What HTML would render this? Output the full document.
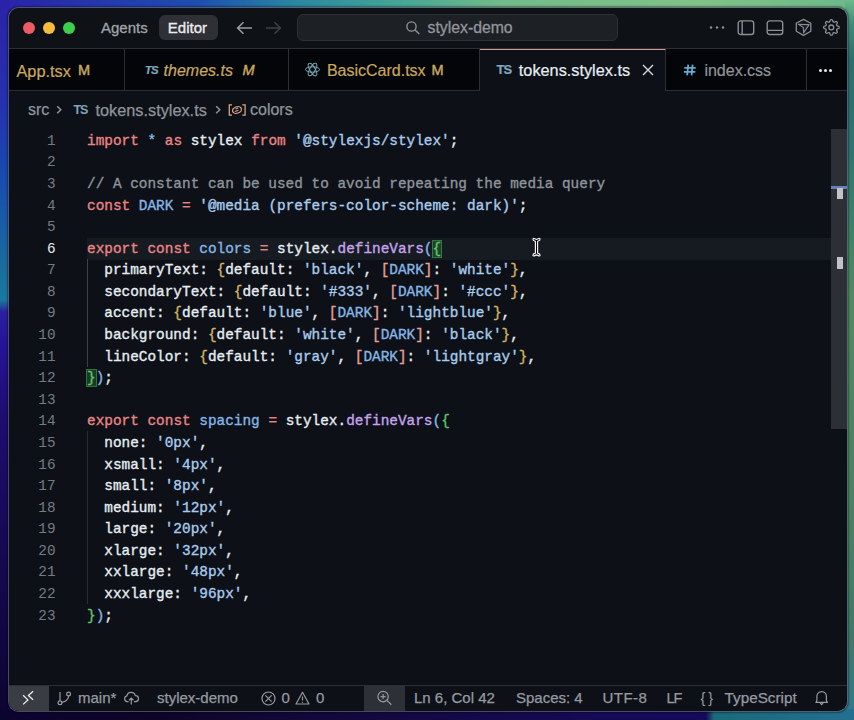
<!DOCTYPE html>
<html><head><meta charset="utf-8">
<style>
*{box-sizing:border-box;margin:0;padding:0}
html,body{width:854px;height:720px;overflow:hidden}
body{position:relative;font-family:"Liberation Sans",sans-serif;background:#1e1a70}
.bg{position:absolute;left:0;top:0;width:854px;height:720px}
#win{position:absolute;left:8px;top:7px;width:840px;height:705px;border-radius:11px;
 border:1px solid rgba(115,112,140,0.62);background:#0d1117;background-clip:padding-box;overflow:hidden;box-shadow:0 0 1.5px 0.5px rgba(0,0,0,0.35)}
.abs{position:absolute}
svg{position:absolute;overflow:visible}
#title{position:absolute;left:0;top:0;width:838px;height:41px;background:#0e1116;border-bottom:1px solid #2c3036}
#tabs{position:absolute;left:0;top:41px;width:838px;height:42px;background:#030509;border-bottom:1px solid #2c3036}
.tab{position:absolute;top:0;height:41px;border-right:1px solid #2c3036}
.lbl{position:absolute;font-size:16px;white-space:pre;line-height:20px;top:11.6px;-webkit-text-stroke:0.2px currentColor}
#editor{position:absolute;left:0;top:83px;width:838px;height:594px;background:#0d1117}
.code{position:absolute;left:78px;font-family:"Liberation Mono",monospace;font-size:14.4px;white-space:pre;line-height:21.58px;color:#e6edf3;-webkit-text-stroke:0.35px currentColor}
.ln{position:absolute;left:0;width:46.5px;text-align:right;font-family:"Liberation Mono",monospace;font-size:14.375px;line-height:21.58px;color:#737b85}
#status{position:absolute;left:0;top:677px;width:838px;height:26px;background:#0d1117;border-top:1px solid #2c3036}
.st{position:absolute;font-size:15px;color:#969aa1;white-space:pre;top:3px;line-height:18px;-webkit-text-stroke:0.25px currentColor}
.k{color:#e98486}.s{color:#a9cbee}.c{color:#86b6e6}.f{color:#c7a3ec}.cm{color:#8d949c}
.b1{color:#86b6e6}.b2{color:#62c46c}.b3{color:#d6b460}.b4{color:#e89e96}
.bm{outline:1px solid rgba(63,185,80,0.6);background:rgba(63,185,80,0.25)}
.gold{color:#c9a85e}.mm{font-weight:normal;font-size:14.5px!important;top:11.2px;-webkit-text-stroke:0.45px currentColor}
</style></head><body>
<div class="abs" style="left:0;top:0;width:854px;height:10px;background:linear-gradient(90deg,#2a22a8 0px,#1d4fb0 200px,#2a8aa0 300px,#45a595 400px,#72bb8a 500px,#80c288 700px,#6cb98a 854px)"></div>
<div class="abs" style="left:0;top:0;width:10px;height:720px;background:linear-gradient(180deg,#2a22a8 0px,#2530b0 100px,#1a45b0 160px,#1a5aa8 220px,#1a6e9c 270px,#1a78a0 300px,#2a20a0 312px,#26149a 340px,#1e0c70 420px,#160850 560px,#0c0430 720px)"></div>
<div class="abs" style="left:845px;top:0;width:9px;height:720px;background:linear-gradient(180deg,#6cb98a 0px,#3f8a78 25px,#2c6e6c 60px,#2f7570 150px,#3f8568 240px,#508a62 300px,#4a8264 500px,#3f7a6a 640px,#2f7890 720px)"></div>
<div class="abs" style="left:0;top:709px;width:854px;height:11px;background:linear-gradient(90deg,#0c0430 0px,#0e0428 150px,#120838 300px,#150a55 600px,#150a5a 706px,#1a6a7a 714px,#246f90 854px)"></div>
<div id="win">
 <div id="title">
  <div class="abs" style="left:14px;top:14px;width:12px;height:12px;border-radius:6px;background:#ee5b66"></div>
  <div class="abs" style="left:34px;top:14px;width:12px;height:12px;border-radius:6px;background:#f5bd3c"></div>
  <div class="abs" style="left:54px;top:14px;width:12px;height:12px;border-radius:6px;background:#3ccf4b"></div>
  <div class="abs" style="left:92px;top:11px;font-size:15px;color:#a0a3a8;line-height:18px;-webkit-text-stroke:0.3px currentColor">Agents</div>
  <div class="abs" style="left:149.6px;top:7.3px;width:59.7px;height:24.4px;border-radius:6px;background:#2e3036"></div>
  <div class="abs" style="left:158.8px;top:11px;font-size:15px;color:#ececee;line-height:18px;-webkit-text-stroke:0.35px currentColor">Editor</div>
  <svg style="left:227px;top:13px" width="17" height="14" viewBox="0 0 17 14"><path d="M16 7H2M7.5 1.2L1.6 7l5.9 5.8" fill="none" stroke="#9a9ca2" stroke-width="1.5"/></svg>
  <svg style="left:256px;top:13px" width="17" height="14" viewBox="0 0 17 14"><path d="M1 7H15M9.5 1.2L15.4 7l-5.9 5.8" fill="none" stroke="#3e4147" stroke-width="1.5"/></svg>
  <div class="abs" style="left:287.5px;top:5.6px;width:321px;height:27.4px;border-radius:6px;background:#1d2025;border:1px solid #2c2f35"></div>
  <svg style="left:397px;top:13px" width="15" height="14" viewBox="0 0 15 14"><circle cx="5.5" cy="5.5" r="4.6" fill="none" stroke="#8e9197" stroke-width="1.4"/><path d="M8.8 8.8L13.3 13" stroke="#8e9197" stroke-width="1.5"/></svg>
  <div class="abs" style="left:418.5px;top:11.3px;font-size:15.8px;color:#92959b;line-height:18px;-webkit-text-stroke:0.3px currentColor">stylex-demo</div>
  <svg style="left:700px;top:17px" width="16" height="6" viewBox="0 0 16 6"><g fill="#8b8e94"><circle cx="2" cy="2.6" r="1.25"/><circle cx="8" cy="2.6" r="1.25"/><circle cx="14" cy="2.6" r="1.25"/></g></svg>
  <svg style="left:728px;top:12px" width="18" height="16" viewBox="0 0 18 16"><rect x="1.2" y="0.9" width="15.5" height="13.6" rx="2.5" fill="none" stroke="#8b8e94" stroke-width="1.4"/><path d="M5.2 1v13.5" stroke="#8b8e94" stroke-width="1.4"/></svg>
  <svg style="left:757px;top:12px" width="18" height="16" viewBox="0 0 18 16"><rect x="1.2" y="0.9" width="15.5" height="13.6" rx="2.5" fill="none" stroke="#8b8e94" stroke-width="1.4"/><path d="M1.2 10.4h15.5" stroke="#8b8e94" stroke-width="1.4"/></svg>
  <svg style="left:786px;top:10px" width="18" height="19" viewBox="0 0 18 19"><path d="M8.5 1.4L15.8 5.3V13.3L8.5 17.4L1.3 13.3V5.3Z" fill="none" stroke="#8b8e94" stroke-width="1.3" stroke-linejoin="round"/><path d="M3.3 6.3L14.1 6.6L8.6 14.9L8.3 9.4Z" fill="#8b8e94" fill-opacity="0.12" stroke="#8b8e94" stroke-width="1.1" stroke-linejoin="round"/></svg>
  <svg style="left:813px;top:11px" width="18" height="18" viewBox="0 0 18 18"><path d="M9.40 0.65 L9.70 0.67 L10.00 0.74 L10.29 0.90 L10.53 1.24 L10.72 1.78 L10.86 2.32 L11.02 2.67 L11.20 2.87 L11.39 2.99 L11.60 3.09 L11.81 3.17 L12.04 3.22 L12.31 3.21 L12.67 3.07 L13.15 2.79 L13.66 2.54 L14.07 2.47 L14.39 2.56 L14.65 2.72 L14.88 2.92 L15.08 3.15 L15.24 3.41 L15.33 3.73 L15.26 4.14 L15.01 4.65 L14.73 5.13 L14.59 5.49 L14.58 5.76 L14.63 5.99 L14.71 6.20 L14.81 6.41 L14.93 6.60 L15.13 6.78 L15.48 6.94 L16.02 7.08 L16.56 7.27 L16.90 7.51 L17.06 7.80 L17.13 8.10 L17.15 8.40 L17.13 8.70 L17.06 9.00 L16.90 9.29 L16.56 9.53 L16.02 9.72 L15.48 9.86 L15.13 10.02 L14.93 10.20 L14.81 10.39 L14.71 10.60 L14.63 10.81 L14.58 11.04 L14.59 11.31 L14.73 11.67 L15.01 12.15 L15.26 12.66 L15.33 13.07 L15.24 13.39 L15.08 13.65 L14.88 13.88 L14.65 14.08 L14.39 14.24 L14.07 14.33 L13.66 14.26 L13.15 14.01 L12.67 13.73 L12.31 13.59 L12.04 13.58 L11.81 13.63 L11.60 13.71 L11.39 13.81 L11.20 13.93 L11.02 14.13 L10.86 14.48 L10.72 15.02 L10.53 15.56 L10.29 15.90 L10.00 16.06 L9.70 16.13 L9.40 16.15 L9.10 16.13 L8.80 16.06 L8.51 15.90 L8.27 15.56 L8.08 15.02 L7.94 14.48 L7.78 14.13 L7.60 13.93 L7.41 13.81 L7.20 13.71 L6.99 13.63 L6.76 13.58 L6.49 13.59 L6.13 13.73 L5.65 14.01 L5.14 14.26 L4.73 14.33 L4.41 14.24 L4.15 14.08 L3.92 13.88 L3.72 13.65 L3.56 13.39 L3.47 13.07 L3.54 12.66 L3.79 12.15 L4.07 11.67 L4.21 11.31 L4.22 11.04 L4.17 10.81 L4.09 10.60 L3.99 10.39 L3.87 10.20 L3.67 10.02 L3.32 9.86 L2.78 9.72 L2.24 9.53 L1.90 9.29 L1.74 9.00 L1.67 8.70 L1.65 8.40 L1.67 8.10 L1.74 7.80 L1.90 7.51 L2.24 7.27 L2.78 7.08 L3.32 6.94 L3.67 6.78 L3.87 6.60 L3.99 6.41 L4.09 6.20 L4.17 5.99 L4.22 5.76 L4.21 5.49 L4.07 5.13 L3.79 4.65 L3.54 4.14 L3.47 3.73 L3.56 3.41 L3.72 3.15 L3.92 2.92 L4.15 2.72 L4.41 2.56 L4.73 2.47 L5.14 2.54 L5.65 2.79 L6.13 3.07 L6.49 3.21 L6.76 3.22 L6.99 3.17 L7.20 3.09 L7.41 2.99 L7.60 2.87 L7.78 2.67 L7.94 2.32 L8.08 1.78 L8.27 1.24 L8.51 0.90 L8.80 0.74 L9.10 0.67Z" fill="none" stroke="#8b8e94" stroke-width="1.3"/><circle cx="9.3" cy="8.4" r="2.4" fill="none" stroke="#8b8e94" stroke-width="1.3"/></svg>
 </div>
 <div id="tabs">
  <div class="tab" style="left:0;width:116px">
   <div class="lbl gold" style="left:7.5px;font-size:16.3px">App.tsx</div><div class="lbl gold mm" style="left:69px">M</div>
  </div>
  <div class="tab" style="left:116px;width:164px">
   <div class="lbl" style="left:19.8px;color:#7ea6bd;font-style:italic;font-weight:bold;font-size:11.5px;top:10.5px;letter-spacing:-0.7px">TS</div>
   <div class="lbl gold" style="left:38.6px;font-style:italic">themes.ts</div><div class="lbl gold mm" style="left:117.5px;font-style:italic">M</div>
  </div>
  <div class="tab" style="left:280px;width:191px">
   <svg style="left:16px;top:13px" width="16" height="16" viewBox="0 0 16 16"><g fill="none" stroke="#7aaab8" stroke-width="1"><ellipse cx="7.5" cy="7.5" rx="7" ry="2.7"/><ellipse cx="7.5" cy="7.5" rx="7" ry="2.7" transform="rotate(60 7.5 7.5)"/><ellipse cx="7.5" cy="7.5" rx="7" ry="2.7" transform="rotate(120 7.5 7.5)"/></g></svg>
   <div class="lbl gold" style="left:37.9px">BasicCard.tsx</div><div class="lbl gold mm" style="left:142.6px">M</div>
  </div>
  <div class="tab" style="left:471px;width:186px;background:#0d1117;height:42px;border-top:1.5px solid #d09a90">
   <div class="lbl" style="left:16.6px;color:#7ea6bd;font-weight:bold;font-size:13px;top:10px;letter-spacing:-1px">TS</div>
   <div class="lbl" style="left:38.8px;color:#e6edf3;top:10.1px;font-size:16.3px">tokens.stylex.ts</div>
   <svg style="left:162px;top:14px" width="12" height="12" viewBox="0 0 12 12"><path d="M1 1L11 11M11 1L1 11" stroke="#d8dadd" stroke-width="1.4"/></svg>
  </div>
  <div class="tab" style="left:657px;width:141px">
   <svg style="left:17px;top:14px" width="14" height="14" viewBox="0 0 14 14"><path d="M5.2 1.6L4.2 12.4M9.6 1.6L8.6 12.4M1.3 4.9H12.7M0.9 8.9H12.3" fill="none" stroke="#66aacd" stroke-width="1.8"/></svg>
   <div class="lbl" style="left:38.4px;color:#8f949b">index.css</div>
  </div>
  <div class="abs" style="left:810px;top:19.5px;width:3px;height:3px;border-radius:2px;background:#e6e6e6;box-shadow:5px 0 0 #e6e6e6,10px 0 0 #e6e6e6"></div>
 </div>
 <div id="editor">
  <div class="abs" style="left:19px;top:8.7px;font-size:16px;color:#8f939a;white-space:pre;line-height:20px;-webkit-text-stroke:0.25px currentColor">src</div>
  <svg style="left:47px;top:13px" width="7" height="11" viewBox="0 0 7 11"><path d="M1.2 2.2L4.8 5.7L1.2 9.2" fill="none" stroke="#8f939a" stroke-width="1.5"/></svg>
  <div class="abs" style="left:64.5px;top:11px;font-size:12.5px;font-weight:bold;color:#7ea6bd;letter-spacing:-1.2px;line-height:16px">TS</div>
  <div class="abs" style="left:86.5px;top:8.7px;font-size:16.3px;color:#8f939a;white-space:pre;line-height:20px;-webkit-text-stroke:0.25px currentColor">tokens.stylex.ts</div>
  <svg style="left:206px;top:13px" width="7" height="11" viewBox="0 0 7 11"><path d="M1.2 2.2L4.8 5.7L1.2 9.2" fill="none" stroke="#8f939a" stroke-width="1.5"/></svg>
  <svg style="left:217px;top:11px" width="22" height="16" viewBox="0 0 22 16"><g fill="none" stroke="#d8a283" stroke-width="1.3"><path d="M6 2.9H3.3V13.1H6M16.3 2.9H19.1V13.1H16.3"/><ellipse cx="11" cy="8" rx="4.6" ry="3.2" transform="rotate(-20 11 8)"/><path d="M9.6 6.9l2.6-1M8.8 9.6l3.6-1.4" stroke-width="1.1"/></g></svg>
  <div class="abs" style="left:241px;top:8.7px;font-size:16px;color:#8f939a;white-space:pre;line-height:20px;-webkit-text-stroke:0.25px currentColor">colors</div>
  <div class="abs" style="left:78px;top:147px;width:744px;height:21.5px;background:rgba(110,118,129,0.10)"></div>
  <div class="abs" style="left:78px;top:167.7px;width:1px;height:107.9px;background:rgba(230,237,243,0.22)"></div>
  <div class="abs" style="left:78px;top:340.4px;width:1px;height:172.6px;background:rgba(230,237,243,0.12)"></div>
<div class="ln" style="top:39.80px">1</div><div class="code" style="top:39.80px"><span class="k">import</span> <span class="c">*</span> <span class="k">as</span> stylex <span class="k">from</span> <span class="s">&#x27;@stylexjs/stylex&#x27;</span>;</div>
<div class="ln" style="top:61.38px">2</div><div class="code" style="top:61.38px"></div>
<div class="ln" style="top:82.96px">3</div><div class="code" style="top:82.96px"><span class="cm">// A constant can be used to avoid repeating the media query</span></div>
<div class="ln" style="top:104.54px">4</div><div class="code" style="top:104.54px"><span class="k">const</span> <span class="c">DARK</span> <span class="k">=</span> <span class="s">&#x27;@media (prefers-color-scheme: dark)&#x27;</span>;</div>
<div class="ln" style="top:126.12px">5</div><div class="code" style="top:126.12px"></div>
<div class="ln" style="top:147.70px;color:#e6edf3">6</div><div class="code" style="top:147.70px"><span class="k">export</span> <span class="k">const</span> <span class="c">colors</span> <span class="k">=</span> stylex.<span class="f">defineVars</span><span class="b1">(</span><span class="b2 bm">{</span></div>
<div class="ln" style="top:169.28px">7</div><div class="code" style="top:169.28px">  primaryText: <span class="b3">{</span>default: <span class="s">&#x27;black&#x27;</span>, <span class="b4">[</span><span class="c">DARK</span><span class="b4">]</span>: <span class="s">&#x27;white&#x27;</span><span class="b3">}</span>,</div>
<div class="ln" style="top:190.86px">8</div><div class="code" style="top:190.86px">  secondaryText: <span class="b3">{</span>default: <span class="s">&#x27;#333&#x27;</span>, <span class="b4">[</span><span class="c">DARK</span><span class="b4">]</span>: <span class="s">&#x27;#ccc&#x27;</span><span class="b3">}</span>,</div>
<div class="ln" style="top:212.44px">9</div><div class="code" style="top:212.44px">  accent: <span class="b3">{</span>default: <span class="s">&#x27;blue&#x27;</span>, <span class="b4">[</span><span class="c">DARK</span><span class="b4">]</span>: <span class="s">&#x27;lightblue&#x27;</span><span class="b3">}</span>,</div>
<div class="ln" style="top:234.02px">10</div><div class="code" style="top:234.02px">  background: <span class="b3">{</span>default: <span class="s">&#x27;white&#x27;</span>, <span class="b4">[</span><span class="c">DARK</span><span class="b4">]</span>: <span class="s">&#x27;black&#x27;</span><span class="b3">}</span>,</div>
<div class="ln" style="top:255.60px">11</div><div class="code" style="top:255.60px">  lineColor: <span class="b3">{</span>default: <span class="s">&#x27;gray&#x27;</span>, <span class="b4">[</span><span class="c">DARK</span><span class="b4">]</span>: <span class="s">&#x27;lightgray&#x27;</span><span class="b3">}</span>,</div>
<div class="ln" style="top:277.18px">12</div><div class="code" style="top:277.18px"><span class="b2 bm">}</span><span class="b1">)</span>;</div>
<div class="ln" style="top:298.76px">13</div><div class="code" style="top:298.76px"></div>
<div class="ln" style="top:320.34px">14</div><div class="code" style="top:320.34px"><span class="k">export</span> <span class="k">const</span> <span class="c">spacing</span> <span class="k">=</span> stylex.<span class="f">defineVars</span><span class="b1">(</span><span class="b2">{</span></div>
<div class="ln" style="top:341.92px">15</div><div class="code" style="top:341.92px">  none: <span class="s">&#x27;0px&#x27;</span>,</div>
<div class="ln" style="top:363.50px">16</div><div class="code" style="top:363.50px">  xsmall: <span class="s">&#x27;4px&#x27;</span>,</div>
<div class="ln" style="top:385.08px">17</div><div class="code" style="top:385.08px">  small: <span class="s">&#x27;8px&#x27;</span>,</div>
<div class="ln" style="top:406.66px">18</div><div class="code" style="top:406.66px">  medium: <span class="s">&#x27;12px&#x27;</span>,</div>
<div class="ln" style="top:428.24px">19</div><div class="code" style="top:428.24px">  large: <span class="s">&#x27;20px&#x27;</span>,</div>
<div class="ln" style="top:449.82px">20</div><div class="code" style="top:449.82px">  xlarge: <span class="s">&#x27;32px&#x27;</span>,</div>
<div class="ln" style="top:471.40px">21</div><div class="code" style="top:471.40px">  xxlarge: <span class="s">&#x27;48px&#x27;</span>,</div>
<div class="ln" style="top:492.98px">22</div><div class="code" style="top:492.98px">  xxxlarge: <span class="s">&#x27;96px&#x27;</span>,</div>
<div class="ln" style="top:514.56px">23</div><div class="code" style="top:514.56px"><span class="b2">}</span><span class="b1">)</span>;</div>
  
<svg style="left:521px;top:145px" width="13" height="22" viewBox="0 0 13 22"><path d="M3 3.2Q3 2.2 4.2 2.5L6.5 3.5L8.8 2.5Q10 2.2 10 3.2Q10 4.6 8.3 5L7.6 5.2V17.2L8.3 17.4Q10 17.8 10 19.2Q10 20.2 8.8 19.9L6.5 18.9L4.2 19.9Q3 20.2 3 19.2Q3 17.8 4.7 17.4L5.4 17.2V5.2L4.7 5Q3 4.6 3 3.2Z" fill="#000" stroke="#f4f4f4" stroke-width="1.15" stroke-linejoin="round"/></svg>
  <div class="abs" style="left:822px;top:38px;width:16px;height:299.5px;background:#2c2f35"></div>
  <div class="abs" style="left:822px;top:95.2px;width:16px;height:2.6px;background:#6580bd"></div>
  <div class="abs" style="left:827.5px;top:97px;width:6.5px;height:11px;background:#c2c3c7"></div>
  <div class="abs" style="left:827.5px;top:166px;width:6.5px;height:12px;background:#c2c3c7"></div>
 </div>
 <div id="status">
  <div class="abs" style="left:0;top:0;width:40px;height:25px;background:#393c43"></div>
  <svg style="left:11px;top:2px" width="18" height="20" viewBox="0 0 18 20"><path d="M3.1 7.3L7.9 11.9L3.1 16.4M13.1 3.3L8.4 7.6L13.1 11.8" fill="none" stroke="#ececec" stroke-width="1.3"/></svg>
  <svg style="left:48px;top:5px" width="15" height="15" viewBox="0 0 15 15"><g fill="none" stroke="#969aa1" stroke-width="1.2"><circle cx="3" cy="11.7" r="1.9"/><circle cx="11.6" cy="3" r="1.9"/><path d="M3 9.8V1M11.6 4.9c0 3.5-3.5 5.6-6.8 6.5"/></g></svg>
  <div class="st" style="left:69px">main*</div>
  <svg style="left:115px;top:5px" width="16" height="15" viewBox="0 0 16 15"><g fill="none" stroke="#969aa1" stroke-width="1.2"><path d="M4.6 10.6H3.2A2.9 2.9 0 0 1 2.9 4.9A4.3 4.3 0 0 1 11.3 4.6A2.95 2.95 0 0 1 11.6 10.6H9.9"/><path d="M7.25 13.6V7M5 9.2L7.25 7L9.5 9.2"/></g></svg>
  <div class="st" style="left:148px">stylex-demo</div>
  <svg style="left:252px;top:5px" width="15" height="15" viewBox="0 0 15 15"><g fill="none" stroke="#969aa1" stroke-width="1.2"><circle cx="7.5" cy="7.5" r="6.5"/><path d="M4.4 4.4l6.2 6.2M10.6 4.4l-6.2 6.2"/></g></svg>
  <div class="st" style="left:272.5px">0</div>
  <svg style="left:286px;top:5px" width="15" height="15" viewBox="0 0 15 15"><g fill="none" stroke="#969aa1" stroke-width="1.2" stroke-linejoin="round"><path d="M7.5 1.3L14 13H1Z"/><path d="M7.5 5.5v4M7.5 10.8v1"/></g></svg>
  <div class="st" style="left:307px">0</div>
  <div class="abs" style="left:355px;top:0;width:41px;height:25px;background:#2d3036"></div>
  <svg style="left:367px;top:5px" width="17" height="16" viewBox="0 0 17 16"><g fill="none" stroke="#969aa1" stroke-width="1.2"><circle cx="7.1" cy="5.6" r="5.2"/><path d="M10.9 9.4L15.4 13.8M7.1 3.1v5M4.6 5.6h5" /></g></svg>
  <div class="st" style="left:405px">Ln 6, Col 42</div>
  <div class="st" style="left:507px">Spaces: 4</div>
  <div class="st" style="left:593.5px;font-size:15px;letter-spacing:0.45px">UTF-8</div>
  <div class="st" style="left:657.5px;font-size:14.6px;top:3px;letter-spacing:-1.1px">LF</div>
  <div class="st" style="left:691.5px;font-size:14.5px;top:2.6px;-webkit-text-stroke:0;letter-spacing:-0.6px">{ }</div>
  <div class="st" style="left:715.5px;font-size:15.3px">TypeScript</div>
  <svg style="left:805px;top:3px" width="16" height="18" viewBox="0 0 16 18"><g fill="none" stroke="#969aa1" stroke-width="1.2" stroke-linejoin="round"><path d="M1.9 13.3Q2.9 12.6 2.9 11V7.3A4.75 4.75 0 0 1 12.4 7.3V11Q12.4 12.6 13.4 13.3Z"/><path d="M6.1 13.9L7.65 15.7L9.2 13.9"/></g></svg>
 </div>
</div>
</body></html>
